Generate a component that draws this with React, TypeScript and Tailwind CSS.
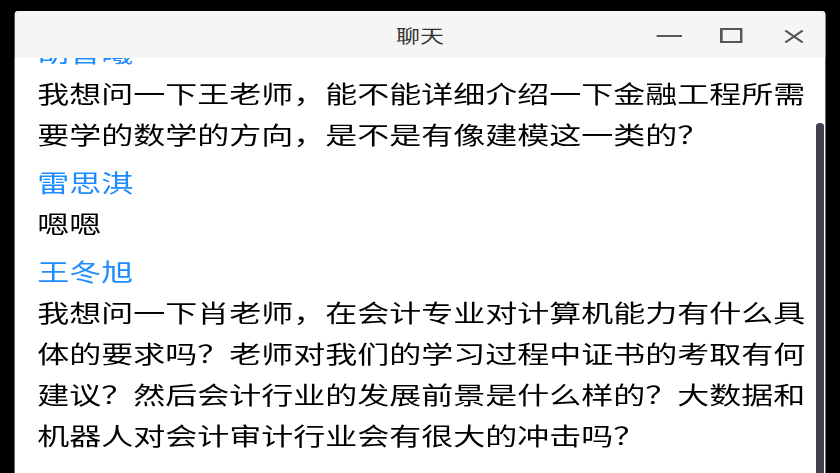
import React from "react";

const messages = [
  {
    name: "胡智曦",
    text: "我想问一下王老师，能不能详细介绍一下金融工程所需要学的数学的方向，是不是有像建模这一类的？",
  },
  { name: "雷思淇", text: "嗯嗯" },
  {
    name: "王冬旭",
    text: "我想问一下肖老师，在会计专业对计算机能力有什么具体的要求吗？老师对我们的学习过程中证书的考取有何建议？然后会计行业的发展前景是什么样的？大数据和机器人对会计审计行业会有很大的冲击吗？",
  },
];

export default function App() {
  return (
    <div className="w-[840px] h-[473px] overflow-hidden bg-black">
      <div
        className="w-[630px] h-[473px] origin-top-left scale-x-[1.333333] pt-[11px] pl-[11px]"
        style={{ fontFamily: '"Noto Sans CJK SC", "Noto Sans", sans-serif' }}
      >
        <div className="w-[608px] h-[462px] flex flex-col bg-white rounded-t-[3px] overflow-hidden">
          {/* title bar */}
          <div className="h-[47px] shrink-0 bg-[#f5f5f5] grid grid-cols-[1fr_auto_1fr] items-center z-10">
            <div />
            <div className="text-[18px] text-[#333] leading-none">聊天</div>
            <div className="flex justify-end h-full">
              <div className="w-[47px] h-full flex items-center justify-center pt-[3px]">
                <svg width="20" height="4" viewBox="0 0 20 4">
                  <line x1="0.5" y1="2" x2="19.5" y2="2" stroke="#575757" strokeWidth="2" />
                </svg>
              </div>
              <div className="w-[47px] h-full flex items-center justify-center pt-[2px]">
                <svg width="17" height="15" viewBox="0 0 17 15">
                  <rect x="1" y="1" width="15" height="13" fill="none" stroke="#575757" strokeWidth="2" />
                </svg>
              </div>
              <div className="w-[47px] h-full flex items-center justify-center pt-[4px]">
                <svg width="15" height="13" viewBox="0 0 15 13">
                  <path d="M1 0.5 L14 12.5 M14 0.5 L1 12.5" stroke="#575757" strokeWidth="1.8" fill="none" />
                </svg>
              </div>
            </div>
          </div>
          {/* content */}
          <div className="flex-1 flex overflow-hidden bg-white">
            <div className="flex-1 pl-[17px] pr-[6px] -mt-[27px] flex flex-col gap-[7px]">
              {messages.map((m, i) => (
                <div key={i} className="text-[24px] leading-[41px]">
                  <div className="text-[#1e8cff]">{m.name}</div>
                  <div className="text-black">{m.text}</div>
                </div>
              ))}
            </div>
            <div className="w-[7px] shrink-0 pt-[65px]">
              <div className="w-[5.5px] h-[400px] rounded-full bg-[#40434f]" />
            </div>
          </div>
        </div>
      </div>
    </div>
  );
}
